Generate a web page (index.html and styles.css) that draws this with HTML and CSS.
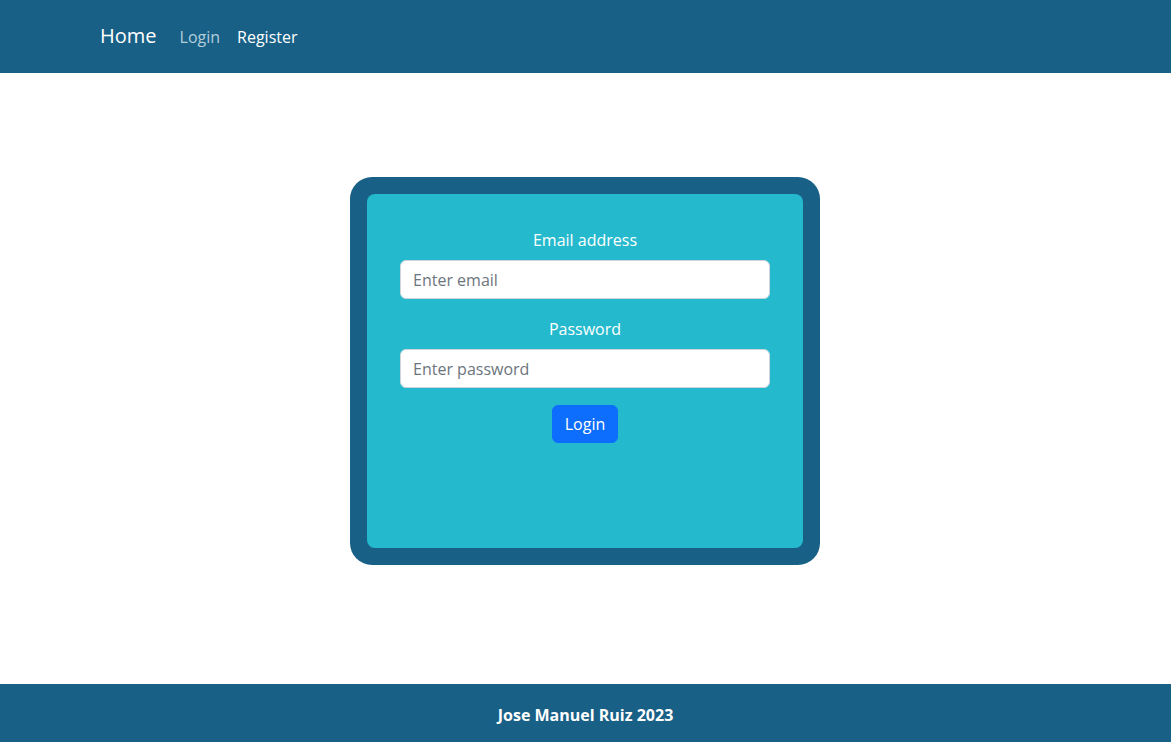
FILE: index.html
```html
<!DOCTYPE html>
<html lang="en">
<head>
<meta charset="utf-8">
<title>Login</title>
<link rel="stylesheet" href="styles.css">
</head>
<body>
<div class="page">
  <header class="navbar">
    <a class="brand" href="#">Home</a>
    <nav class="nav">
      <a class="nav-link muted" href="#">Login</a>
      <a class="nav-link" href="#">Register</a>
    </nav>
  </header>
  <main class="main">
    <div class="card-outer">
      <form class="card-inner">
        <div class="field">
          <label class="label" for="email">Email address</label>
          <input class="input" id="email" type="email" placeholder="Enter email">
        </div>
        <div class="field last">
          <label class="label" for="password">Password</label>
          <input class="input" id="password" type="password" placeholder="Enter password">
        </div>
        <button class="btn" type="button">Login</button>
      </form>
    </div>
  </main>
  <footer class="footer">Jose Manuel Ruiz 2023</footer>
</div>
</body>
</html>
```

FILE: styles.css
```css
* { box-sizing: border-box; }
html, body { margin: 0; padding: 0; }
body {
  font-family: "Open Sans", "Noto Sans", sans-serif;
  font-size: 16px;
  line-height: 1.5;
  color: #212529;
  background: #fff;
}
.page {
  min-height: 742px;
  display: flex;
  flex-direction: column;
}
.navbar {
  height: 73px;
  background: #186086;
  display: flex;
  align-items: center;
  padding-left: 100px;
}
.brand {
  color: #fff;
  text-decoration: none;
  font-size: 20px;
  margin-right: 23px;
  margin-top: -1px;
}
.nav { display: flex; gap: 17px; }
.nav-link {
  color: #fff;
  text-decoration: none;
  font-size: 16px;
}
.nav-link.muted { color: #b3cfdc; }
.main {
  flex: 1;
  display: flex;
  justify-content: center;
  align-items: flex-start;
  padding-top: 104px;
  padding-right: 1px;
}
.card-outer {
  width: 470px;
  height: 388px;
  background: #186086;
  border-radius: 22px;
  padding: 17px;
}
.card-inner {
  height: 100%;
  background: #24b9cd;
  border-radius: 8px;
  padding: 34px 33px 0;
  display: flex;
  flex-direction: column;
  align-items: center;
}
.field {
  width: 100%;
  display: flex;
  flex-direction: column;
  align-items: center;
  margin-bottom: 18px;
}
.field.last { margin-bottom: 17px; }
.label {
  color: #fff;
  margin-bottom: 8px;
}
.input {
  width: 100%;
  height: 39px;
  border: 1px solid #ced4da;
  border-radius: 6px;
  padding: 6px 12px;
  font: inherit;
  color: #212529;
  background: #fff;
}
.input::placeholder { color: #6c757d; }
.btn {
  font: inherit;
  color: #fff;
  background: #0d6efd;
  border: 1px solid #0d6efd;
  border-radius: 6px;
  height: 38px;
  padding: 0 12px;
  cursor: pointer;
}
.footer {
  height: 58px;
  background: #186086;
  color: #fff;
  font-weight: 700;
  display: flex;
  align-items: center;
  justify-content: center;
  padding-top: 3px;
}
```
